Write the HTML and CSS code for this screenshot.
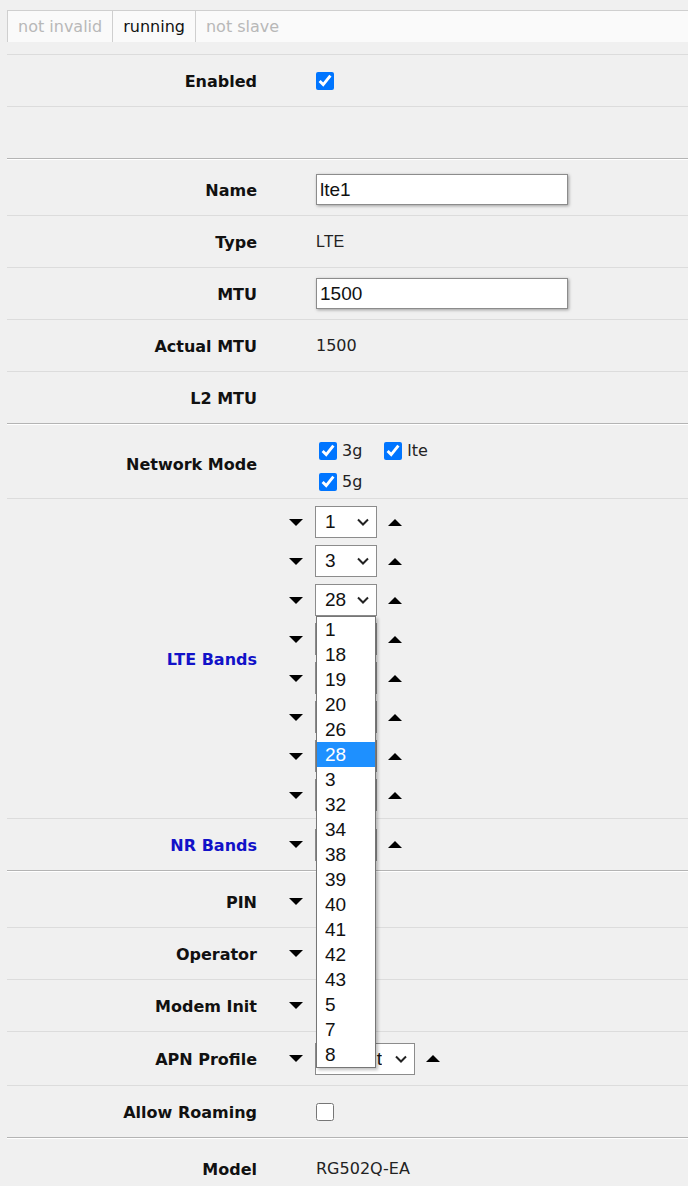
FILE: index.html
```html
<!DOCTYPE html>
<html lang="en">
<head>
  <meta charset="UTF-8" />
  <title>Interface lte1</title>
  <link rel="stylesheet" href="styles.css">
</head>
<body>
  <svg class="defs" width="0" height="0">
    <symbol id="dn" viewBox="0 0 14 7"><polygon points="0,0 14,0 7,7" /></symbol>
    <symbol id="up" viewBox="0 0 14 7"><polygon points="0,7 14,7 7,0" /></symbol>
    <symbol id="chev" viewBox="0 0 12 8"><polyline points="1,1.5 6,6.5 11,1.5" fill="none" stroke="#222" stroke-width="2" /></symbol>
  </svg>

  <div class="tabs">
    <span class="tab off">not invalid</span>
    <span class="tab">running</span>
    <span class="tab off last">not slave</span>
  </div>

  <div class="form">
    <div class="row">
      <div class="lbl">Enabled</div>
      <div class="val"><input type="checkbox" class="cb" checked /></div>
    </div>
    <div class="row sec"><div class="lbl"></div><div class="val"></div></div>

    <div class="row">
      <div class="lbl">Name</div>
      <div class="val"><input class="txt" value="lte1" /></div>
    </div>
    <div class="row">
      <div class="lbl">Type</div>
      <div class="val arial">LTE</div>
    </div>
    <div class="row">
      <div class="lbl">MTU</div>
      <div class="val"><input class="txt" value="1500" /></div>
    </div>
    <div class="row">
      <div class="lbl">Actual MTU</div>
      <div class="val">1500</div>
    </div>
    <div class="row sec">
      <div class="lbl">L2 MTU</div>
      <div class="val"></div>
    </div>

    <div class="row">
      <div class="lbl">Network Mode</div>
      <div class="val">
        <div class="modes">
          <label class="opt"><input type="checkbox" class="cb" checked />3g</label>
          <label class="opt"><input type="checkbox" class="cb" checked />lte</label>
          <label class="opt"><input type="checkbox" class="cb" checked />5g</label>
        </div>
      </div>
    </div>
    <div class="row">
      <div class="lbl blue">LTE Bands</div>
      <div class="val">
        <div class="bands">
          <div class="line">
            <svg class="arr dn"><use href="#dn" /></svg>
            <div class="sel"><span>1</span><svg class="chev"><use href="#chev" /></svg></div>
            <svg class="arr up"><use href="#up" /></svg>
          </div>
          <div class="line">
            <svg class="arr dn"><use href="#dn" /></svg>
            <div class="sel"><span>3</span><svg class="chev"><use href="#chev" /></svg></div>
            <svg class="arr up"><use href="#up" /></svg>
          </div>
          <div class="line">
            <svg class="arr dn"><use href="#dn" /></svg>
            <div class="sel"><span>28</span><svg class="chev"><use href="#chev" /></svg>
              <div class="drop">
                <div>1</div>
                <div>18</div>
                <div>19</div>
                <div>20</div>
                <div>26</div>
                <div class="hi">28</div>
                <div>3</div>
                <div>32</div>
                <div>34</div>
                <div>38</div>
                <div>39</div>
                <div>40</div>
                <div>41</div>
                <div>42</div>
                <div>43</div>
                <div>5</div>
                <div>7</div>
                <div>8</div>
              </div>
            </div>
            <svg class="arr up"><use href="#up" /></svg>
          </div>
          <div class="line">
            <svg class="arr dn"><use href="#dn" /></svg>
            <div class="sel"><span class="hid">7</span><svg class="chev"><use href="#chev" /></svg></div>
            <svg class="arr up"><use href="#up" /></svg>
          </div>
          <div class="line">
            <svg class="arr dn"><use href="#dn" /></svg>
            <div class="sel"><span class="hid">8</span><svg class="chev"><use href="#chev" /></svg></div>
            <svg class="arr up"><use href="#up" /></svg>
          </div>
          <div class="line">
            <svg class="arr dn"><use href="#dn" /></svg>
            <div class="sel"><span class="hid">20</span><svg class="chev"><use href="#chev" /></svg></div>
            <svg class="arr up"><use href="#up" /></svg>
          </div>
          <div class="line">
            <svg class="arr dn"><use href="#dn" /></svg>
            <div class="sel"><span class="hid">38</span><svg class="chev"><use href="#chev" /></svg></div>
            <svg class="arr up"><use href="#up" /></svg>
          </div>
          <div class="line">
            <svg class="arr dn"><use href="#dn" /></svg>
            <div class="sel"><span class="hid">40</span><svg class="chev"><use href="#chev" /></svg></div>
            <svg class="arr up"><use href="#up" /></svg>
          </div>
        </div>
      </div>
    </div>
    <div class="row sec">
      <div class="lbl blue">NR Bands</div>
      <div class="val">
        <div class="line">
          <svg class="arr dn"><use href="#dn" /></svg>
          <div class="sel"><span class="hid">78</span><svg class="chev"><use href="#chev" /></svg></div>
          <svg class="arr up"><use href="#up" /></svg>
        </div>
      </div>
    </div>

    <div class="row">
      <div class="lbl">PIN</div>
      <div class="val"><div class="line"><svg class="arr dn"><use href="#dn" /></svg></div></div>
    </div>
    <div class="row">
      <div class="lbl">Operator</div>
      <div class="val"><div class="line"><svg class="arr dn"><use href="#dn" /></svg></div></div>
    </div>
    <div class="row">
      <div class="lbl">Modem Init</div>
      <div class="val"><div class="line"><svg class="arr dn"><use href="#dn" /></svg></div></div>
    </div>
    <div class="row apn">
      <div class="lbl">APN Profile</div>
      <div class="val">
        <div class="line">
          <svg class="arr dn"><use href="#dn" /></svg>
          <div class="sel wide"><span class="peek">default</span><svg class="chev"><use href="#chev" /></svg></div>
          <svg class="arr up"><use href="#up" /></svg>
        </div>
      </div>
    </div>
    <div class="row sec">
      <div class="lbl">Allow Roaming</div>
      <div class="val"><input type="checkbox" class="cb" /></div>
    </div>

    <div class="row">
      <div class="lbl">Model</div>
      <div class="val">RG502Q-EA</div>
    </div>
  </div>
</body>
</html>
```

FILE: styles.css
```css
body {
  margin: 0;
  padding: 10px 0 0 7px;
  background: #f0f0f0;
  color: #111;
  font-family: "DejaVu Sans", Verdana, sans-serif;
  font-size: 16px;
}

.defs {
  position: absolute;
}

.tabs {
  display: flex;
  height: 31px;
  margin-bottom: 12px;
  background: #fafafa;
  border-top: 1px solid #cfcfcf;
  border-left: 1px solid #cfcfcf;
}

.tab {
  padding: 0 10px;
  line-height: 31px;
  border-right: 1px solid #cfcfcf;
}

.tab.off {
  color: #b8b8b8;
}

.tab.last {
  border-right: none;
}

.form {
  border-top: 1px solid #dcdcdc;
}

.row {
  display: grid;
  grid-template-columns: 250px 1fr;
  column-gap: 59px;
  align-items: center;
  min-height: 51px;
  border-bottom: 1px solid #dcdcdc;
}

.row.sec {
  border-bottom: 1px solid #b4b4b4;
  box-shadow: 0 1px 0 #fff;
  margin-bottom: 5px;
}

.row.apn {
  min-height: 53px;
}

.lbl {
  padding-top: 2px;
  text-align: right;
  font-weight: bold;
}

.lbl.blue {
  color: #1212c8;
}

.val {
  color: #222;
}

.arial {
  font-family: "Liberation Sans", Arial, sans-serif;
}

.cb {
  display: block;
  width: 18px;
  height: 18px;
  margin: 0;
}

.txt {
  box-sizing: border-box;
  width: 252px;
  height: 31px;
  padding: 0 3px;
  border: 1px solid #8c8c8c;
  background: #fff;
  box-shadow: 1px 1px 3px rgba(0, 0, 0, 0.35);
  color: #111;
  font: 19px "Liberation Sans", Arial, sans-serif;
}

.modes {
  display: flex;
  flex-wrap: wrap;
  width: 140px;
  row-gap: 12px;
  padding: 12px 0 7px 3px;
}

.opt {
  display: flex;
  align-items: center;
  gap: 5px;
  height: 19px;
  margin-right: 22px;
}

.bands {
  display: flex;
  flex-direction: column;
  gap: 7px;
  padding: 7px 0;
}

.line {
  display: flex;
  align-items: center;
  margin-left: -27px;
}

.arr {
  display: block;
  width: 14px;
  height: 7px;
  fill: #000;
}

.arr.dn {
  margin-right: 12px;
}

.arr.up {
  margin-left: 11px;
}

.sel {
  position: relative;
  box-sizing: border-box;
  display: flex;
  align-items: center;
  justify-content: space-between;
  width: 62px;
  height: 32px;
  padding: 0 7px 0 9px;
  border: 1px solid #8c8c8c;
  background: #fff;
  color: #111;
  font: 19px "Liberation Sans", Arial, sans-serif;
}

.sel.wide {
  width: 100px;
}

.hid {
  visibility: hidden;
}

.peek {
  clip-path: inset(0 0 0 50px);
}

.chev {
  width: 12px;
  height: 8px;
}

.drop {
  position: absolute;
  top: 31px;
  left: 0;
  z-index: 5;
  box-sizing: border-box;
  width: 60px;
  border: 1px solid #767676;
  background: #fff;
  box-shadow: 2px 2px 3px rgba(0, 0, 0, 0.25);
}

.drop div {
  height: 25px;
  line-height: 25px;
  padding-left: 8px;
}

.drop .hi {
  background: #1e90ff;
  color: #fff;
}
```
